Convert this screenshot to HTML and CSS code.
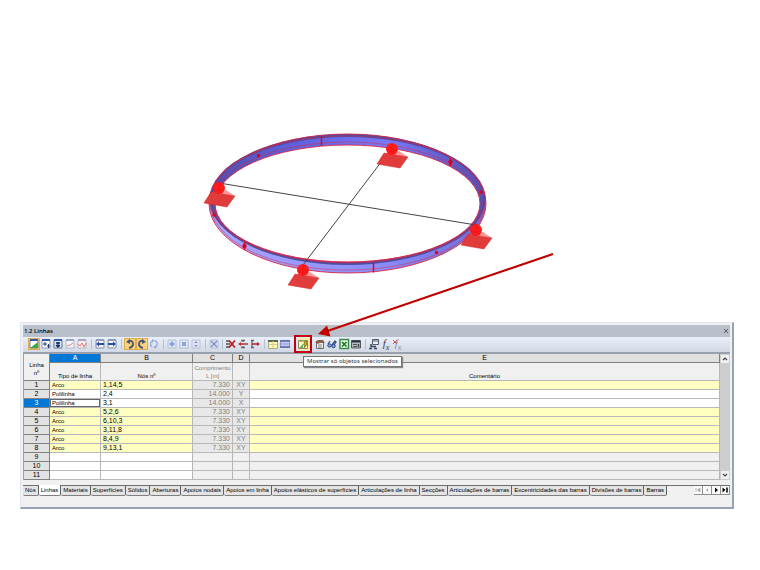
FILE: index.html
```html
<!doctype html>
<html lang="pt">
<head>
    <meta charset="UTF-8">
    <meta name="viewport" content="width=device-width, initial-scale=1.0">
    <title>1.2 Linhas</title>
    <link rel="stylesheet" href="styles.css">
</head>
<body>
<!-- 3D model -->
<svg class="scene" viewBox="0 0 760 322" preserveAspectRatio="xMidYMax meet">
    <defs>
        <linearGradient id="wall">
            <stop offset="0" stop-color="#4f4fae"/>
            <stop offset=".3" stop-color="#6060dc"/>
            <stop offset=".65" stop-color="#7878f8"/>
            <stop offset="1" stop-color="#5050b4"/>
        </linearGradient>
        <linearGradient id="front">
            <stop offset="0" stop-color="#a8a8ff"/>
            <stop offset=".6" stop-color="#8c8cfa"/>
            <stop offset="1" stop-color="#7070dc"/>
        </linearGradient>
        <g id="support">
            <path d="M0 4L7 2L16 8L-8 4z" fill="#f99"/>
            <path d="M-8 4L16 8L8 19L-15 15z" fill="#e03c3c" stroke="#d22" stroke-width=".5"/>
            <circle r="6" fill="#ff1c1c"/>
            <path d="M-5 1Q0 4 5 1M0 -6V6" fill="none" stroke="#e81010" stroke-width=".6"/>
        </g>
    </defs>
    <ellipse cx="347.5" cy="203.5" rx="138.5" ry="69.5" fill="url(#front)"/>
    <ellipse cx="347.5" cy="199.5" rx="138" ry="65.5" fill="#4c4ca6"/>
    <ellipse cx="347.5" cy="199.5" rx="136" ry="62.5" fill="url(#wall)"/>
    <ellipse cx="347.5" cy="203.5" rx="132.5" ry="58.5" fill="#fff"/>
    <g class="rim">
        <ellipse cx="347.5" cy="203.5" rx="138.5" ry="69.5"/>
        <ellipse cx="347.5" cy="203.5" rx="132.5" ry="58.5"/>
        <ellipse class="thin" cx="347.5" cy="199.5" rx="138" ry="63.5"/>
        <ellipse class="thin" cx="347.5" cy="202" rx="134.5" ry="60"/>
        <path class="thin" d="M210 208C220 249 282 270 347 270S475 249 485 208"/>
    </g>
    <g class="joint">
        <path d="M321.500 136V145.500M373.500 263V272.500M450.500 158V166M244.500 242V250"/>
        <circle cx="258.500" cy="155.500" r="1"/>
        <circle cx="481" cy="192" r="1"/>
        <circle cx="450.500" cy="162" r="1.500"/>
        <circle cx="244.500" cy="246" r="1.500"/>
        <circle cx="436.500" cy="252.500" r="1"/>
        <circle cx="214" cy="215" r="1"/>
    </g>
    <path class="cross" d="M219 183L476 225M391 149L303 265"/>
    <use href="#support" x="219" y="188"/>
    <use href="#support" x="392" y="149"/>
    <use href="#support" x="476" y="230"/>
    <use href="#support" x="303" y="270"/>
    <!-- arrow to the toolbar button -->
    <path d="M553 254L326 331.500" stroke="#c00000" stroke-width="2.200"/>
    <path d="M318 334L327 325.500L330.500 336.500z" fill="#c00000"/>
</svg>

<div class="window">
    <div class="titlebar">
        <span>1.2 Linhas</span>
        <button class="close" aria-label="Fechar"><svg viewBox="0 0 6 6"><path d="M1 1L5 5M5 1L1 5" stroke="#5c6068"/></svg></button>
    </div>

    <div class="toolbar">
        <button class="tool on" aria-label="Tabela"><svg viewBox="0 0 12 12"><path d="M2 2H10V10H2z" fill="#fff" stroke="#70859f"/><path d="M2 2H10" stroke="#345ca8" stroke-width="2"/><path d="M2 10L10 4V10z" fill="#3faa3f"/></svg></button>
        <button class="tool" aria-label="Inserir"><svg viewBox="0 0 12 12"><path d="M2 2H10V10H2z" fill="#fff" stroke="#8a9ab5"/><path d="M2 2H10" stroke="#345ca8" stroke-width="2"/><path d="M3 6H7M5 4V8M7 8H10M8.500 6V10" stroke="#223c78"/></svg></button>
        <button class="tool" aria-label="Importar"><svg viewBox="0 0 12 12"><path d="M2 2H10V10H2z" fill="#dde6f5" stroke="#60769c"/><path d="M2 2H10" stroke="#345ca8" stroke-width="2"/><path d="M4 5H8M6 4V8M4 7L6 9L8 7" stroke="#14285c" stroke-width="1.300" fill="none"/></svg></button>
        <button class="tool" aria-label="Gráfico"><svg viewBox="0 0 12 12"><path d="M2 2H10V10H2z" fill="#f4f5f9" stroke="#b3bac8"/><path d="M2 2H10" stroke="#9aa8c0" stroke-width="2"/><path d="M3 8L6 7L9 5" stroke="#d78282" fill="none"/></svg></button>
        <button class="tool" aria-label="Curva"><svg viewBox="0 0 12 12"><path d="M2 2H10V10H2z" fill="#f8eef2" stroke="#c3b3c0"/><path d="M2 2H10" stroke="#aaa5b9" stroke-width="2"/><path d="M2 6L4 8L6 5L8 9L10 5" stroke="#dd7777" fill="none"/></svg></button>
        <i class="sep"></i>
        <button class="tool" aria-label="Tabela anterior"><svg viewBox="0 0 12 12"><path d="M2 2H10V10H2z" fill="#eef2fa" stroke="#8291ad"/><path d="M2 2H10" stroke="#66799e"/><path d="M2 6L5 3.500V5H10V7H5V8.500z" fill="#28509c"/></svg></button>
        <button class="tool" aria-label="Tabela seguinte"><svg viewBox="0 0 12 12"><path d="M2 2H10V10H2z" fill="#eef2fa" stroke="#8291ad"/><path d="M2 2H10" stroke="#66799e"/><path d="M10 6L7 3.500V5H2V7H7V8.500z" fill="#28509c"/></svg></button>
        <i class="sep"></i>
        <button class="tool on" aria-label="Anular"><svg viewBox="0 0 12 12"><path d="M4 3Q9 2 9 6Q9 9 5 10" stroke="#4a5878" stroke-width="2" fill="none"/><path d="M2 4L6 1V6z" fill="#4a5878"/></svg></button>
        <button class="tool on" aria-label="Repetir"><svg viewBox="0 0 12 12"><path d="M8 3Q3 2 3 6Q3 9 7 10" stroke="#4a5878" stroke-width="2" fill="none"/><path d="M10 4L6 1V6z" fill="#4a5878"/></svg></button>
        <button class="tool" aria-label="Atualizar"><svg viewBox="0 0 12 12"><path d="M4 3Q1 6 4 9M7 2.500Q11 5 8 9" stroke="#9eb0d3" stroke-width="1.500" fill="none"/><path d="M4 1L7 2.500L4 5zM8 7V10.500L5 9.500z" fill="#9eb0d3"/></svg></button>
        <i class="sep"></i>
        <button class="tool" aria-label="Vista 1"><svg viewBox="0 0 12 12"><path d="M2 2H10V10H2z" fill="#e0e6f4" stroke="#b5bfd4"/><path d="M6 3L9 6L6 9L3 6z" fill="#8ea3dc"/></svg></button>
        <button class="tool" aria-label="Vista 2"><svg viewBox="0 0 12 12"><path d="M2 2H10V10H2z" fill="#e0e6f4" stroke="#b5bfd4"/><path d="M4 4H8V8H4z" fill="#8ea3dc"/></svg></button>
        <button class="tool" aria-label="Vista 3"><svg viewBox="0 0 12 12"><path d="M2 2H10V10H2z" fill="#e0e6f4" stroke="#b5bfd4"/><path d="M4 5L6 3L8 5zM4 7L6 9L8 7z" fill="#8095cc"/></svg></button>
        <i class="sep"></i>
        <button class="tool" aria-label="Limpar"><svg viewBox="0 0 12 12"><path d="M2 2H10V10H2z" fill="#dae2f2" stroke="#b5bfd4"/><path d="M3 3L9 9M9 3L3 9" stroke="#7e92bd" stroke-width="1.300"/></svg></button>
        <i class="sep narrow"></i>
        <button class="tool" aria-label="Apagar"><svg viewBox="0 0 12 12"><path d="M1 3H4M1 6H5M1 9H4" stroke="#555" stroke-width="1.300"/><path d="M4 2.500L10 9.500M10 2.500L4 9.500" stroke="#b81c1c" stroke-width="1.800"/></svg></button>
        <button class="tool" aria-label="Inserir linha"><svg viewBox="0 0 12 12"><path d="M4 2.500H8M4 9.500H8M6 2V4M6 8V10" stroke="#666" stroke-width="1.300"/><path d="M1 6L4 4V5.200H11V6.800H4V8z" fill="#b83030"/></svg></button>
        <button class="tool" aria-label="Remover linha"><svg viewBox="0 0 12 12"><path d="M2 2.500H5M2 9.500H5M3 2V10" stroke="#666" stroke-width="1.300"/><path d="M11 6L8 4V5.200H3V6.800H8V8z" fill="#b82020"/></svg></button>
        <i class="sep"></i>
        <button class="tool" aria-label="Cor das linhas"><svg viewBox="0 0 12 12"><path d="M1.500 2.500H10.500V10.500H1.500z" fill="#fff8b0" stroke="#a9a98c"/><path d="M1 3H11" stroke="#5c6644" stroke-width="2"/><path d="M2 6.500H10M6 3V10" stroke="#d3cf8e"/></svg></button>
        <button class="tool" aria-label="Grelha"><svg viewBox="0 0 12 12"><path d="M1.500 2.500H10.500V9.500H1.500z" fill="#c4ccfa" stroke="#8c92c2"/><path d="M1 3H11M1 9H11" stroke="#5c66a4" stroke-width="1.500"/><path d="M2 6H10" stroke="#8f97d8"/></svg></button>
        <i class="sep"></i>
        <button class="tool marked" aria-label="Mostrar só objetos selecionados" aria-describedby="tip"><svg viewBox="0 0 12 12"><path d="M1.500 2.500H10.500V10.500H1.500z" fill="#fff9b8" stroke="#8c8c60"/><path d="M1 3H11" stroke="#a5a268" stroke-width="1.500"/><path d="M2 10L6 6V10z" fill="#60b060"/><path d="M8 3L6.500 7H8L7 10L10.500 6H9L10 3z" fill="#e8b800" stroke="#69601c" stroke-width=".7"/></svg></button>
        <i class="sep narrow"></i>
        <button class="tool" aria-label="Propriedades"><svg viewBox="0 0 12 12"><path d="M2.500 4.500H9.500V10.500H2.500z" fill="#eee" stroke="#6d6d70"/><path d="M1 4L4 2H9L11 5L7 4L4 6z" fill="#8d5d41"/><path d="M4 7H8M4 9H8" stroke="#888"/></svg></button>
        <button class="tool" aria-label="Procurar"><svg viewBox="0 0 12 12"><path d="M2 6L4 3M6 7L9 3L10 4L8 7" fill="none" stroke="#34538f" stroke-width="1.300"/><circle cx="3.500" cy="7.500" r="1.700" fill="#8bb0e8" stroke="#263b74"/><circle cx="7.500" cy="8" r="1.700" fill="#8bb0e8" stroke="#263b74"/></svg></button>
        <button class="tool" aria-label="Excel"><svg viewBox="0 0 12 12"><path d="M2 1.500H10.500V10.500H2z" fill="#e9f7e9" stroke="#3a8c44" stroke-width="1.500"/><path d="M4 4L8.500 8.500M8.500 4L4 8.500" stroke="#1c7a2c" stroke-width="1.700"/></svg></button>
        <button class="tool" aria-label="Calculadora"><svg viewBox="0 0 12 12"><path d="M1.500 2.500H10.500V10H1.500z" fill="#b8bcc4" stroke="#50545c"/><path d="M2 3.500H10" stroke="#30343c" stroke-width="2"/><path d="M3 6.500H7M3 8.500H7" stroke="#555"/><path d="M8.500 6V9" stroke="#444" stroke-width="1.500"/></svg></button>
        <i class="sep"></i>
        <button class="tool" aria-label="Parâmetros"><svg viewBox="0 0 12 12"><path d="M4.500 1.500H10.500V6.500H4.500z" fill="#eef" stroke="#555a66"/><path d="M5 3H10" stroke="#555a66"/><path d="M3 6V8.500H8M1 10.500H4M6 10.500H9" stroke="#35435f" stroke-width="1.500" fill="none"/></svg></button>
        <button class="tool fx" aria-label="Fórmula">f<sub>x</sub></button>
        <button class="tool fx off" aria-label="Apagar fórmula">f<sub>x</sub><svg viewBox="0 0 12 12"><path d="M1 2L5 6M5 2L1 6" stroke="#c85a5a"/></svg></button>
        <span class="tooltip" id="tip" role="tooltip">Mostrar só objetos selecionados</span>
    </div>

    <div class="grid">
        <table>
            <colgroup><col class="c-no"><col class="c-a"><col class="c-b"><col class="c-c"><col class="c-d"><col></colgroup>
            <thead>
                <tr class="letters"><th rowspan="2" class="corner">Linha<br>nº</th><th class="current">A</th><th>B</th><th>C</th><th>D</th><th>E</th></tr>
                <tr class="names"><th>Tipo de linha</th><th>Nós nº</th><th class="dim">Comprimento<br>L [m]</th><th></th><th>Comentário</th></tr>
            </thead>
            <tbody>
                <tr class="arc"><th>1</th><td>Arco</td><td>1,14,5</td><td>7.330</td><td>XY</td><td></td></tr>
                <tr><th>2</th><td>Polilinha</td><td>2,4</td><td>14.000</td><td>Y</td><td></td></tr>
                <tr class="selected"><th>3</th><td>Polilinha</td><td>3,1</td><td>14.000</td><td>X</td><td></td></tr>
                <tr class="arc"><th>4</th><td>Arco</td><td>5,2,6</td><td>7.330</td><td>XY</td><td></td></tr>
                <tr class="arc"><th>5</th><td>Arco</td><td>6,10,3</td><td>7.330</td><td>XY</td><td></td></tr>
                <tr class="arc"><th>6</th><td>Arco</td><td>3,11,8</td><td>7.330</td><td>XY</td><td></td></tr>
                <tr class="arc"><th>7</th><td>Arco</td><td>8,4,9</td><td>7.330</td><td>XY</td><td></td></tr>
                <tr class="arc"><th>8</th><td>Arco</td><td>9,13,1</td><td>7.330</td><td>XY</td><td></td></tr>
                <tr class="empty"><th>9</th><td></td><td></td><td></td><td></td><td></td></tr>
                <tr class="empty"><th>10</th><td></td><td></td><td></td><td></td><td></td></tr>
                <tr class="empty"><th>11</th><td></td><td></td><td></td><td></td><td></td></tr>
            </tbody>
        </table>
        <div class="scrollbar">
            <button aria-label="Para cima"><svg viewBox="0 0 8 8"><path d="M2 5L4 3L6 5" fill="none" stroke="#444" stroke-width="1.200"/></svg></button>
            <button aria-label="Para baixo"><svg viewBox="0 0 8 8"><path d="M2 3L4 5L6 3" fill="none" stroke="#444" stroke-width="1.200"/></svg></button>
        </div>
    </div>

    <div class="tabs">
        <button>Nós</button>
        <button class="active">Linhas</button>
        <button>Materiais</button>
        <button>Superfícies</button>
        <button>Sólidos</button>
        <button>Aberturas</button>
        <button>Apoios nodais</button>
        <button>Apoios em linha</button>
        <button>Apoios elásticos de superfícies</button>
        <button>Articulações de linha</button>
        <button>Secções</button>
        <button>Articulações de barras</button>
        <button>Excentricidades das barras</button>
        <button>Divisões de barras</button>
        <button>Barras</button>
        <div class="pager">
            <button aria-label="Primeiro" disabled><svg viewBox="0 0 8 8"><path d="M2 2V6M6 2L3.500 4L6 6z" stroke="currentColor" fill="currentColor" stroke-width=".8"/></svg></button>
            <button aria-label="Anterior" disabled><svg viewBox="0 0 8 8"><path d="M5 2L3 4L5 6z" fill="currentColor"/></svg></button>
            <button aria-label="Seguinte"><svg viewBox="0 0 8 8"><path d="M3 1.500L6 4L3 6.500z" fill="currentColor"/></svg></button>
            <button aria-label="Último"><svg viewBox="0 0 8 8"><path d="M1.500 1.500L4.500 4L1.500 6.500z" fill="currentColor"/><path d="M6 1.500V6.500" stroke="currentColor" stroke-width="1.500"/></svg></button>
        </div>
    </div>
</div>
</body>
</html>
```

FILE: styles.css
```css
*{
    box-sizing: border-box;
}
body{
    margin: 0;
    background-color: #fff;
    color: #000;
    font-family: "Liberation Sans", Arial, sans-serif;
    font-size: 6px;
    line-height: 9px;
}
button{
    margin: 0;
    padding: 0;
    border: 0;
    background: none;
    color: inherit;
    font: inherit;
}
svg{
    display: block;
}
.scene{
    position: relative;
    z-index: 2;
    width: 100%;
    height: 322px;
    overflow: visible;
    pointer-events: none;
}
.rim{
    fill: none;
    stroke: #dc2440;
    stroke-width: .9;
}
.rim .thin{
    stroke-width: .5;
}
.joint{
    fill: #e00020;
    stroke: #e00020;
    stroke-width: 1.4;
}
.cross{
    stroke: #444;
    stroke-width: 1;
}
.window{
    margin: 0 26px 0 20px;
    padding: 2px 2px 11px;
    border: 1px solid #dfe6f2;
    border-right: 2px solid #98a2b6;
    border-bottom: 2px solid #98a2b6;
    background-color: #f0f0f0;
}
.titlebar{
    display: flex;
    justify-content: space-between;
    align-items: center;
    height: 12px;
    padding: 0 1px;
    background-color: #b9c0cb;
    font-family: "Open Sans", sans-serif;
    font-size: 6px;
    font-weight: 600;
}
.close svg{
    width: 6px;
    height: 6px;
}
.toolbar{
    position: relative;
    display: flex;
    align-items: center;
    height: 15px;
    padding: 0 0 1px 5px;
    background: linear-gradient(#eaf0fa, #d2d8e4);
}
.tool{
    position: relative;
    flex: none;
    width: 12px;
    height: 12px;
}
.tool svg{
    width: 12px;
    height: 12px;
}
.tool.on{
    background-color: #ffd27a;
    outline: 1px solid #e0aa50;
    outline-offset: -1px;
}
.tool.marked{
    z-index: 1;
    outline: 2px solid #c00010;
    outline-offset: 1px;
    background-color: #ffe9a0;
}
.sep{
    flex: none;
    width: 6px;
    height: 10px;
    background: linear-gradient(#b8c0ce, #b8c0ce) center / 1px 10px no-repeat;
}
.sep.narrow{
    width: 5px;
}
.fx{
    color: #3c3c48;
    font-family: "Liberation Serif", serif;
    font-size: 11px;
    font-style: italic;
    white-space: nowrap;
}
.fx sub{
    font-size: 8px;
    line-height: 0;
}
.fx.off{
    color: #8c8c98;
}
.fx.off svg{
    position: absolute;
    left: 0;
    top: 0;
}
.tooltip{
    position: absolute;
    left: 280px;
    top: 19px;
    z-index: 3;
    padding: 0 3px;
    border: 1px solid #767676;
    background-color: #fff;
    box-shadow: 1px 1px 1px #888;
    color: #333;
    font-family: "Noto Sans", sans-serif;
    font-size: 6px;
    white-space: nowrap;
}
.grid{
    display: flex;
    border-top: 2px solid #98a0ac;
    border-left: 1px solid #a0a0a0;
}
table{
    flex: 1;
    table-layout: fixed;
    width: 100%;
    border-collapse: separate;
    border-spacing: 0;
}
.c-no{
    width: 26px;
}
.c-a{
    width: 51px;
}
.c-b{
    width: 92px;
}
.c-c{
    width: 40px;
}
.c-d{
    width: 17px;
}
th, td{
    height: 9px;
    padding: 0 2px;
    border-right: 1px solid #b8b8b8;
    border-bottom: 1px solid #b8b8b8;
    font-size: 7px;
    line-height: 8px;
    font-weight: normal;
    white-space: nowrap;
}
td{
    background-color: #fff;
}
td:nth-child(2){
    font-size: 6px;
}
.letters th{
    border-color: #808080;
    background-color: #e0e0e0;
}
.letters .current{
    background-color: #0078d7;
    color: #fff;
}
.names th{
    height: 18px;
    padding: 0;
    font-size: 6px;
    vertical-align: bottom;
    background-color: #f0f0f0;
}
.letters .corner{
    padding: 4px 0 0;
    background-color: #f0f0f0;
    font-size: 6px;
}
tbody th{
    border-color: #808080;
    background-color: #e2e2e2;
}
td:nth-child(4), td:nth-child(5){
    background-color: #e8e8e8;
    color: #808080;
    text-align: center;
}
td:nth-child(4){
    text-align: right;
}
.names .dim{
    color: #808080;
}
.arc td:nth-child(2), .arc td:nth-child(3), .arc td:nth-child(6){
    background-color: #ffffc1;
}
.selected th{
    background-color: #0078d7;
    color: #fff;
}
.selected td:nth-child(2){
    box-shadow: inset 0 0 0 1px #666;
}
.empty td:nth-child(n+4){
    background-color: #f0f0f0;
}
.scrollbar{
    display: flex;
    flex-direction: column;
    justify-content: space-between;
    width: 10px;
    padding: 1px;
    background-color: #cdcdcd;
}
.scrollbar button{
    background-color: #f0f0f0;
}
.scrollbar svg{
    width: 8px;
    height: 8px;
}
.tabs{
    display: flex;
    margin-top: 5px;
    border-top: 1px solid #707070;
}
.tabs > button{
    flex: none;
    height: 10px;
    padding: 0 2px;
    border-right: 1px solid #606060;
    border-bottom: 1px solid #808080;
    border-radius: 0 0 2px 2px;
    background-color: #e4e4e4;
    white-space: nowrap;
}
.tabs > .active{
    margin-top: -1px;
    height: 11px;
    background-color: #fff;
}
.pager{
    display: flex;
    margin-left: auto;
}
.pager button{
    width: 9px;
    height: 9px;
    border-right: 1px solid #909090;
    border-bottom: 1px solid #909090;
    background-color: #fafafa;
    color: #000;
}
.pager button:disabled{
    color: #aaa;
}
.pager svg{
    width: 8px;
    height: 8px;
}
```
